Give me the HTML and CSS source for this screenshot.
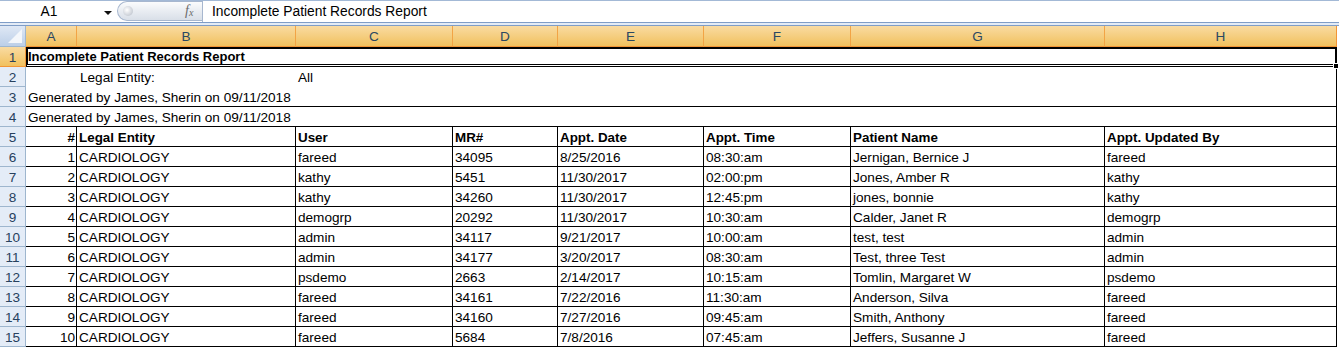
FILE: index.html
```html
<!DOCTYPE html>
<html>
<head>
<meta charset="utf-8">
<title>Incomplete Patient Records Report</title>
<link rel="stylesheet" href="styles.css">
</head>
<body>
<div class="fbar">
  <div class="namebox"><span class="ref">A1</span><span class="arrow"></span></div>
  <div class="pill"><span class="knob"></span><span class="fx">f<sub>x</sub></span></div>
  <div class="formula">Incomplete Patient Records Report</div>
</div>
<div class="sep"></div>
<div class="sheet">
  <div class="corner"><span class="tri"></span></div>
  <div class="ch">A</div><div class="ch">B</div><div class="ch">C</div><div class="ch">D</div><div class="ch">E</div><div class="ch">F</div><div class="ch">G</div><div class="ch last">H</div>

  <div class="rh sel">1</div>
  <div class="title">Incomplete Patient Records Report<span class="handle"></span></div>

  <div class="rh">2</div>
  <div class="c"></div><div class="c pl">Legal Entity:</div><div class="c">All</div><div class="c"></div><div class="c"></div><div class="c"></div><div class="c"></div><div class="c endr"></div>

  <div class="rh">3</div>
  <div class="merged">Generated by James, Sherin on 09/11/2018</div>

  <div class="rh">4</div>
  <div class="merged">Generated by James, Sherin on 09/11/2018</div>

  <div class="rh">5</div>
  <div class="d num b">#</div><div class="d b">Legal Entity</div><div class="d b">User</div><div class="d b">MR#</div><div class="d b">Appt. Date</div><div class="d b">Appt. Time</div><div class="d b">Patient Name</div><div class="d b">Appt. Updated By</div>

  <div class="rh">6</div>
  <div class="d num">1</div><div class="d">CARDIOLOGY</div><div class="d">fareed</div><div class="d">34095</div><div class="d">8/25/2016</div><div class="d">08:30:am</div><div class="d">Jernigan, Bernice J</div><div class="d">fareed</div>

  <div class="rh">7</div>
  <div class="d num">2</div><div class="d">CARDIOLOGY</div><div class="d">kathy</div><div class="d">5451</div><div class="d">11/30/2017</div><div class="d">02:00:pm</div><div class="d">Jones, Amber R</div><div class="d">kathy</div>

  <div class="rh">8</div>
  <div class="d num">3</div><div class="d">CARDIOLOGY</div><div class="d">kathy</div><div class="d">34260</div><div class="d">11/30/2017</div><div class="d">12:45:pm</div><div class="d">jones, bonnie</div><div class="d">kathy</div>

  <div class="rh">9</div>
  <div class="d num">4</div><div class="d">CARDIOLOGY</div><div class="d">demogrp</div><div class="d">20292</div><div class="d">11/30/2017</div><div class="d">10:30:am</div><div class="d">Calder, Janet R</div><div class="d">demogrp</div>

  <div class="rh">10</div>
  <div class="d num">5</div><div class="d">CARDIOLOGY</div><div class="d">admin</div><div class="d">34117</div><div class="d">9/21/2017</div><div class="d">10:00:am</div><div class="d">test, test</div><div class="d">admin</div>

  <div class="rh">11</div>
  <div class="d num">6</div><div class="d">CARDIOLOGY</div><div class="d">admin</div><div class="d">34177</div><div class="d">3/20/2017</div><div class="d">08:30:am</div><div class="d">Test, three Test</div><div class="d">admin</div>

  <div class="rh">12</div>
  <div class="d num">7</div><div class="d">CARDIOLOGY</div><div class="d">psdemo</div><div class="d">2663</div><div class="d">2/14/2017</div><div class="d">10:15:am</div><div class="d">Tomlin, Margaret W</div><div class="d">psdemo</div>

  <div class="rh">13</div>
  <div class="d num">8</div><div class="d">CARDIOLOGY</div><div class="d">fareed</div><div class="d">34161</div><div class="d">7/22/2016</div><div class="d">11:30:am</div><div class="d">Anderson, Silva</div><div class="d">fareed</div>

  <div class="rh">14</div>
  <div class="d num">9</div><div class="d">CARDIOLOGY</div><div class="d">fareed</div><div class="d">34160</div><div class="d">7/27/2016</div><div class="d">09:45:am</div><div class="d">Smith, Anthony</div><div class="d">fareed</div>

  <div class="rh">15</div>
  <div class="d num">10</div><div class="d">CARDIOLOGY</div><div class="d">fareed</div><div class="d">5684</div><div class="d">7/8/2016</div><div class="d">07:45:am</div><div class="d">Jeffers, Susanne J</div><div class="d">fareed</div>
</div>
</body>
</html>
```

FILE: styles.css
```css
* { box-sizing: border-box; }
html, body { margin: 0; padding: 0; background: #ffffff; }
body {
  font-family: "Liberation Sans", Arial, sans-serif;
  font-size: 13.6px;
  color: #000;
  width: 1339px;
  height: 348px;
  overflow: hidden;
}

/* formula bar */
.fbar {
  display: flex;
  height: 22px;
  border-top: 1px solid #a3b9d6;
  background: #fff;
}
.namebox {
  width: 117px;
  position: relative;
  display: flex;
  align-items: center;
}
.ref {
  width: 98px;
  text-align: center;
  font-size: 13.8px;
  color: #000;
}
.arrow {
  position: absolute;
  left: 104px;
  top: 10px;
  width: 0;
  height: 0;
  border-left: 4px solid transparent;
  border-right: 4px solid transparent;
  border-top: 4px solid #111;
}
.pill {
  width: 85px;
  height: 20px;
  border: 1px solid #a7b7cf;
  border-right: none;
  border-radius: 10px 0 0 10px;
  background: linear-gradient(#fbfcfd, #e9edf2 50%, #d9dfe8);
  position: relative;
}
.knob {
  position: absolute;
  left: 5px;
  top: 4px;
  width: 10px;
  height: 10px;
  border-radius: 50%;
  background: radial-gradient(circle at 40% 40%, #ffffff, #c9ced6 70%, #b4bac4);
}
.fx {
  position: absolute;
  left: 67px;
  top: 1px;
  font-family: "Liberation Serif", "Times New Roman", serif;
  font-style: italic;
  font-size: 14px;
  color: #6b6b6b;
}
.fx sub { font-size: 10px; vertical-align: -1px; }
.formula {
  flex: 1;
  border-left: 1px solid #a7b7cf;
  padding-left: 9px;
  display: flex;
  align-items: center;
  font-size: 13.8px;
}
.sep {
  height: 4px;
  border-top: 1px solid #7f9dc7;
  border-bottom: 1px solid #7f9dc7;
  background: #e3ebf6;
}

/* sheet grid */
.sheet {
  display: grid;
  grid-template-columns: 26px 51px 219px 157px 105px 146px 147px 254px 232px;
  grid-template-rows: 21px repeat(15, 20px);
  position: relative;
}
.corner {
  background: linear-gradient(#dfe8f5, #bccfe8);
  border-right: 1px solid #9eb6ce;
  border-bottom: 1px solid #9eb6ce;
  position: relative;
}
.tri {
  position: absolute;
  right: 3px;
  bottom: 3px;
  width: 0;
  height: 0;
  border-left: 14px solid transparent;
  border-bottom: 14px solid #f4f7fb;
}
.ch {
  background: linear-gradient(#f9dba2, #f1c15e);
  border-right: 1px solid #f2a445;
  border-bottom: 1px solid #f29536;
  color: #2a4862;
  display: flex;
  align-items: center;
  justify-content: center;
  padding-top: 1px;
}
.ch.last { border-right: 1px solid #f29536; }

.rh {
  background: #e4ecf7;
  border-right: 1px solid #9eb6ce;
  border-bottom: 1px solid #9eb6ce;
  color: #27415e;
  display: flex;
  align-items: center;
  justify-content: center;
  padding-top: 1px;
}
.rh.sel {
  background: linear-gradient(#f9dba2, #f1c15e);
  border-right: 1px solid #f29536;
  border-bottom: 1px solid #f29536;
}

.title {
  grid-column: 2 / 10;
  border: 2px solid #000;
  border-bottom: 3px double #000;
  font-weight: bold;
  font-size: 13px;
  padding-left: 0;
  display: flex;
  align-items: center;
  position: relative;
}
.handle {
  position: absolute;
  right: -4px;
  bottom: -5px;
  width: 6px;
  height: 6px;
  background: #000;
  border: 1px solid #fff;
}

.c {
  display: flex;
  align-items: center;
  white-space: nowrap;
  padding-left: 2px;
  padding-top: 1px;
}
.c.pl { padding-left: 3px; }
.c.endr { border-right: 1px solid #000; }

.merged {
  grid-column: 2 / 10;
  border-right: 1px solid #000;
  border-bottom: 1px solid #000;
  display: flex;
  align-items: center;
  padding-left: 2px;
  padding-top: 1px;
  white-space: nowrap;
}

.d {
  border-right: 1px solid #000;
  border-bottom: 1px solid #000;
  display: flex;
  align-items: center;
  padding-left: 2px;
  padding-top: 1px;
  white-space: nowrap;
  overflow: hidden;
}
.d.num { justify-content: flex-end; padding-left: 0; padding-right: 1px; }
.d.b { font-weight: bold; font-size: 13.4px; }
```
